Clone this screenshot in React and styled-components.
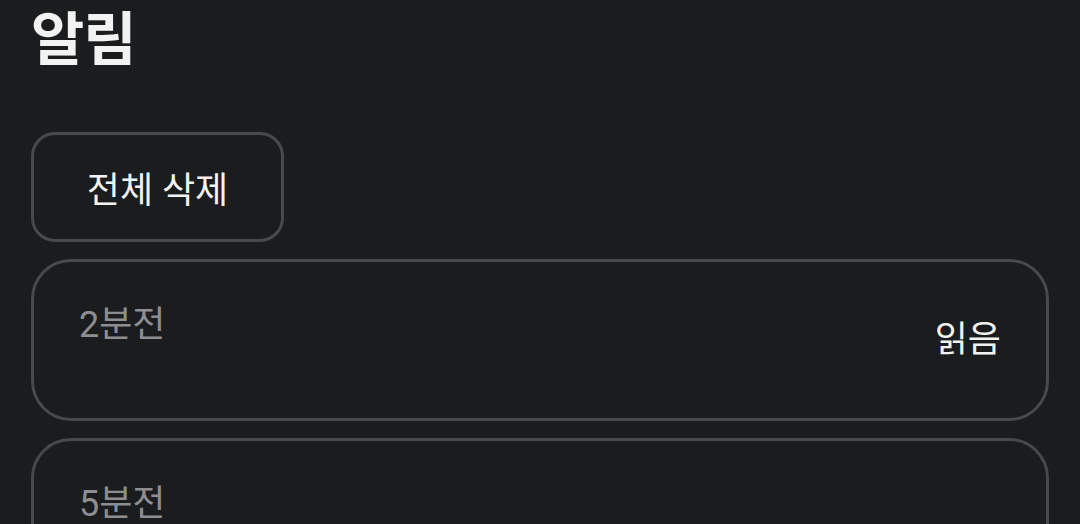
import React from "react";
import styled, { createGlobalStyle } from "styled-components";

const GlobalStyle = createGlobalStyle`
  body {
    margin: 0;
    background-color: #1b1c1e;
    font-family: Roboto, "Noto Sans CJK KR", sans-serif;
  }
`;

const Page = styled.main`
  display: flex;
  flex-direction: column;
  padding: 0 31px;
  min-height: 524px;
  box-sizing: border-box;
  background-color: #1b1c1e;
  color: #f2f2f2;
`;

const Title = styled.h1`
  margin: 0;
  font-size: 58px;
  font-weight: 700;
  line-height: 80px;
  letter-spacing: -1px;
`;

const ClearButton = styled.button`
  align-self: flex-start;
  margin-top: 52px;
  width: 253px;
  height: 110px;
  background-color: transparent;
  border: 3px solid #48494b;
  border-radius: 24px;
  color: #f2f2f2;
  font-family: inherit;
  font-size: 36px;
  font-weight: 400;
`;

const List = styled.div`
  display: flex;
  flex-direction: column;
  gap: 17px;
  margin-top: 17px;
`;

const Card = styled.div`
  display: flex;
  align-items: center;
  justify-content: space-between;
  height: 162px;
  padding: 0 45px;
  box-sizing: border-box;
  border: 3px solid #48494b;
  border-radius: 40px;
  flex-shrink: 0;
`;

const Body = styled.div`
  align-self: stretch;
  padding-top: 39px;
`;

const Time = styled.span`
  color: #8e8e90;
  font-size: 36px;
  line-height: 48px;
`;

const Status = styled.span`
  color: #f2f2f2;
  font-size: 36px;
  line-height: 48px;
`;

const notifications = [
  { id: 1, time: "2분전", read: true },
  { id: 2, time: "5분전", read: false },
];

export default function App() {
  return (
    <>
      <GlobalStyle />
      <Page>
        <Title>알림</Title>
        <ClearButton>전체 삭제</ClearButton>
        <List>
          {notifications.map((n) => (
            <Card key={n.id}>
              <Body>
                <Time>{n.time}</Time>
              </Body>
              {n.read && <Status>읽음</Status>}
            </Card>
          ))}
        </List>
      </Page>
    </>
  );
}
